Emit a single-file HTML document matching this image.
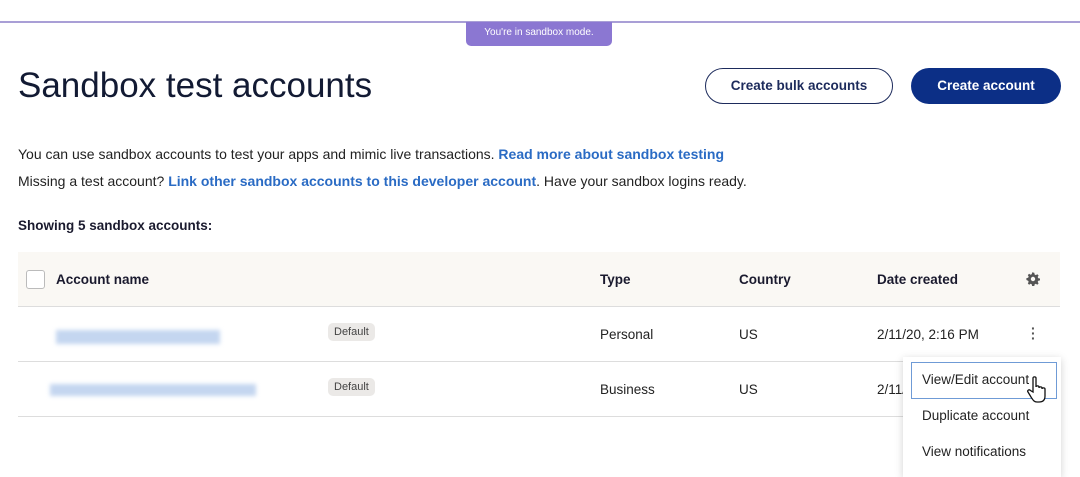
<!DOCTYPE html>
<html><head><style>
body{margin:0;width:1080px;height:473px;overflow:hidden;background:#fff;font-family:"Liberation Sans",sans-serif;color:#1a1a2e;position:relative}
.a{position:absolute;white-space:nowrap}
a{color:#2a6bc4;font-weight:bold;text-decoration:none}
.blur{position:absolute;background:#c4d6f0;filter:blur(2px)}
.def{position:absolute;background:#ebe9e7;border-radius:5px;font-size:11px;color:#444;padding:3px 6px}
.hl{position:absolute;left:18px;width:1042px;height:1px;background:#ddd}
.th{font-size:13.5px;font-weight:bold;top:272px}
.td{font-size:13.5px;color:#222}
</style></head><body>
<div class="a" style="left:0;top:21px;width:1080px;height:2px;background:#a99fd6"></div>
<div class="a" style="left:466px;top:22px;width:146px;height:24px;background:#8b77d2;border-radius:0 0 5px 5px;color:#fff;font-size:10px;text-align:center;line-height:22px">You're in sandbox mode.</div>
<div class="a" style="left:18px;top:66px;font-size:35px;color:#121a33">Sandbox test accounts</div>
<div class="a" style="left:705px;top:68px;width:186px;height:34px;border:1.5px solid #1d2b5c;border-radius:18px;font-size:13.5px;font-weight:bold;color:#1d2b5c;text-align:center;line-height:34px">Create bulk accounts</div>
<div class="a" style="left:911px;top:68px;width:150px;height:36px;background:#0c2f86;border-radius:18px;font-size:13.5px;font-weight:bold;color:#fff;text-align:center;line-height:36px">Create account</div>
<div class="a" style="left:18px;top:146px;font-size:14px;color:#222">You can use sandbox accounts to test your apps and mimic live transactions. <a>Read more about sandbox testing</a></div>
<div class="a" style="left:18px;top:173px;font-size:14px;color:#222">Missing a test account? <a>Link other sandbox accounts to this developer account</a>. Have your sandbox logins ready.</div>
<div class="a" style="left:18px;top:218px;font-size:13.5px;font-weight:bold">Showing 5 sandbox accounts:</div>
<div class="a" style="left:18px;top:252px;width:1042px;height:54px;background:#faf8f4"></div>
<div class="a" style="left:26px;top:270px;width:17px;height:17px;border:1px solid #bbb;border-radius:3px;background:#fff"></div>
<div class="a th" style="left:56px">Account name</div>
<div class="a th" style="left:600px">Type</div>
<div class="a th" style="left:739px">Country</div>
<div class="a th" style="left:877px">Date created</div>
<svg class="a" style="left:1026px;top:272px" width="14" height="14" viewBox="0 0 14 14"><path d="M7 0.5l1.3 0.3 .3 1.7 1.2.6 1.5-.9 1.3 1.3-.9 1.5.6 1.2 1.7.3v1.9l-1.7.3-.6 1.2.9 1.5-1.3 1.3-1.5-.9-1.2.6-.3 1.7H6.1l-.3-1.7-1.2-.6-1.5.9-1.3-1.3.9-1.5-.6-1.2L.4 8V6.1l1.7-.3.6-1.2-.9-1.5 1.3-1.3 1.5.9 1.2-.6.3-1.7z" fill="#555"/><circle cx="7" cy="7" r="2.2" fill="#faf8f4"/></svg>
<div class="hl" style="top:306px"></div>
<div class="blur" style="left:56px;top:330px;width:164px;height:14px"></div>
<div class="def" style="left:328px;top:323px">Default</div>
<div class="a td" style="left:600px;top:327px">Personal</div>
<div class="a td" style="left:739px;top:327px">US</div>
<div class="a td" style="left:877px;top:327px">2/11/20, 2:16 PM</div>
<div class="a" style="left:1031px;top:326px;font-size:14px;font-weight:bold;color:#555;line-height:5px">·<br>·<br>·</div>
<div class="hl" style="top:361px"></div>
<div class="blur" style="left:50px;top:384px;width:206px;height:12px"></div>
<div class="def" style="left:328px;top:378px">Default</div>
<div class="a td" style="left:600px;top:382px">Business</div>
<div class="a td" style="left:739px;top:382px">US</div>
<div class="a td" style="left:877px;top:382px">2/11/20</div>
<div class="hl" style="top:416px"></div>
<div class="a" style="left:903px;top:357px;width:158px;height:120px;background:#fff;box-shadow:0 2px 8px rgba(0,0,0,.18)"></div>
<div class="a" style="left:911px;top:362px;width:144px;height:35px;border:1.5px solid #6f9bd6"></div>
<div class="a td" style="left:922px;top:372px;font-size:13.5px">View/Edit account</div>
<div class="a td" style="left:922px;top:408px;font-size:13.5px">Duplicate account</div>
<div class="a td" style="left:922px;top:444px;font-size:13.5px">View notifications</div>
<svg class="a" style="left:1027px;top:375px" width="22" height="30" viewBox="0 0 22 30"><path d="M6 3c0-1.5 3-1.5 3 0v9c0-1.5 3-1.5 3 0v1c0-1.5 3-1.5 3 0v1c0-1.5 3-1.5 3 0v7c0 4-2 6-6 6h-2c-3 0-4-2-6-5l-3-5c-1-1.5 1-3 2.5-1.5L6 17z" fill="#fff" stroke="#111" stroke-width="1.3"/></svg>
</body></html>
